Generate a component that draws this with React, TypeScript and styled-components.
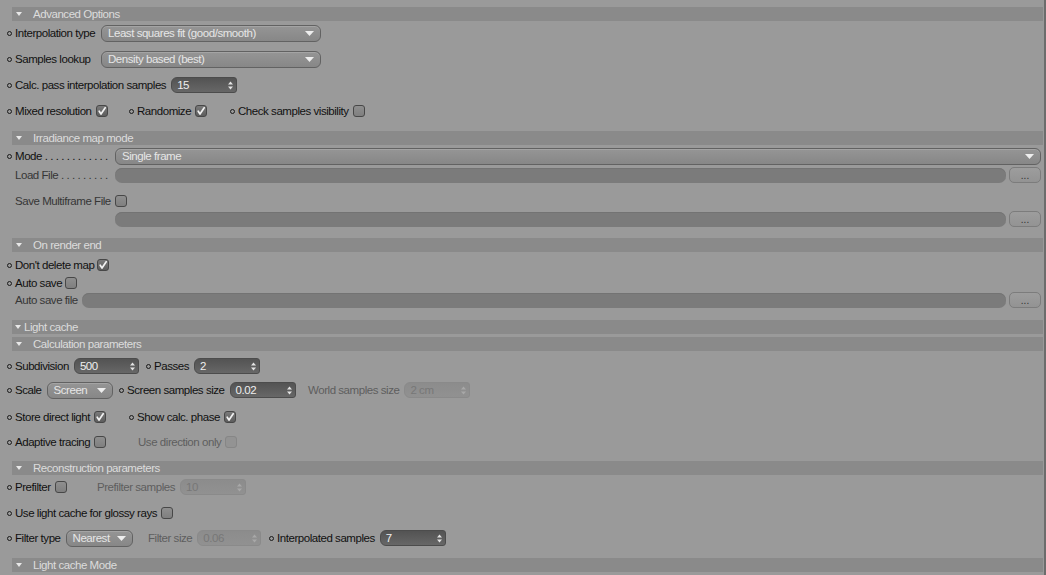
import styled, { createGlobalStyle } from "styled-components";

const GlobalStyle = createGlobalStyle`
  html, body {
    margin: 0;
    padding: 0;
    background: #9a9a9a;
  }
`;

const Page = styled.div`
  width: 1044px;
  height: 575px;
  overflow: hidden;
  border-right: 2px solid #6c6c6c;
  background: #9a9a9a;
  display: flex;
  flex-direction: column;
  font-family: "Liberation Sans", Arial, sans-serif;
  font-size: 11.5px;
  letter-spacing: -0.45px;
  color: #111;
`;

const Header = styled.div<{ $mt: number; $tight?: boolean }>`
  flex: none;
  margin: ${(p) => p.$mt}px 1px 0 12px;
  height: 14px;
  background: #8a8a8a;
  color: #dcdcdc;
  display: flex;
  align-items: center;
  padding-left: ${(p) => (p.$tight ? 3 : 4)}px;
  white-space: nowrap;
`;

const Caret = styled.span<{ $tight?: boolean }>`
  width: 0;
  height: 0;
  border-left: 3px solid transparent;
  border-right: 3px solid transparent;
  border-top: 4px solid #e8e8e8;
  margin-right: ${(p) => (p.$tight ? 3 : 11)}px;
`;

const Row = styled.div<{ $mt: number }>`
  flex: none;
  margin-top: ${(p) => p.$mt}px;
  height: 16px;
  display: flex;
  align-items: center;
  padding: 0 3px 0 7px;
`;

const Item = styled.div<{ $w?: number }>`
  display: flex;
  align-items: center;
  height: 100%;
  flex: ${(p) => (p.$w ? "none" : "1")};
  width: ${(p) => (p.$w ? `${p.$w}px` : "auto")};
`;

const Spacer = styled.div<{ $w: number }>`
  flex: none;
  width: ${(p) => p.$w}px;
`;

const Dot = styled.span<{ $off?: boolean }>`
  flex: none;
  box-sizing: border-box;
  width: 5px;
  height: 5px;
  border: 1px solid #1a1a1a;
  border-radius: 50%;
  margin-right: 3px;
  visibility: ${(p) => (p.$off ? "hidden" : "visible")};
`;

const Label = styled.span<{ $w?: number; $tone?: "dim" | "off" }>`
  flex: none;
  white-space: nowrap;
  min-width: ${(p) => (p.$w ? `${p.$w}px` : "0")};
  color: ${(p) =>
    p.$tone === "dim" ? "#363636" : p.$tone === "off" ? "#5e5e5e" : "#111"};
`;

const Select = styled.div<{ $w?: number; $ml?: number }>`
  box-sizing: border-box;
  height: 17px;
  flex: ${(p) => (p.$w ? "none" : "1")};
  width: ${(p) => (p.$w ? `${p.$w}px` : "auto")};
  margin-left: ${(p) => p.$ml ?? 0}px;
  border: 1px solid #626262;
  border-radius: 6px;
  background: linear-gradient(#959595, #878787);
  box-shadow: inset 0 1px 0 #a4a4a4;
  color: #e6e6e6;
  padding: 0 6px 0 6px;
  display: flex;
  align-items: center;
  justify-content: space-between;
  white-space: nowrap;
  overflow: hidden;
`;

const Spinner = styled.div<{ $w: number; $ml?: number; $off?: boolean }>`
  box-sizing: border-box;
  flex: none;
  height: 16px;
  width: ${(p) => p.$w}px;
  margin-left: ${(p) => p.$ml ?? 5}px;
  border-radius: 6px 3px 3px 6px;
  background: ${(p) =>
    p.$off ? "linear-gradient(#8c8c8c, #919191)" : "linear-gradient(#535353, #676767)"};
  border: 1px solid ${(p) => (p.$off ? "#8a8a8a" : "#4c4c4c")};
  color: ${(p) => (p.$off ? "#777" : "#eeeeee")};
  display: flex;
  align-items: center;
  justify-content: space-between;
  padding: 0 3px 0 5px;
`;

const Field = styled.div<{ $ml?: number }>`
  flex: 1;
  height: 15px;
  margin-left: ${(p) => p.$ml ?? 0}px;
  border-radius: 7px;
  background: #7b7b7b;
  box-shadow: inset 0 1px 0 #737373;
`;

const Browse = styled.div`
  box-sizing: border-box;
  flex: none;
  width: 32px;
  height: 16px;
  margin-left: 3px;
  border: 1px solid #7c7c7c;
  border-radius: 5px;
  background: linear-gradient(#9d9d9d, #939393);
  color: #333;
  font-size: 10px;
  letter-spacing: 0;
  display: flex;
  align-items: flex-end;
  justify-content: center;
  line-height: 12px;
`;

const Box = styled.span<{ $on?: boolean; $off?: boolean; $ml?: number }>`
  box-sizing: border-box;
  flex: none;
  width: 12px;
  height: 12px;
  margin-left: ${(p) => p.$ml ?? 4}px;
  border-radius: 3px;
  border: 1px solid ${(p) => (p.$off ? "#868686" : "#474747")};
  background: ${(p) =>
    p.$off
      ? "#939393"
      : p.$on
      ? "linear-gradient(#7a7a7a, #5d5d5d)"
      : "linear-gradient(#8f8f8f, #7f7f7f)"};
  display: flex;
  align-items: center;
  justify-content: center;
`;

function DownArrow() {
  return (
    <svg width="9" height="5" viewBox="0 0 9 5">
      <path d="M0 0 L9 0 L4.5 5 Z" fill="#eeeeee" />
    </svg>
  );
}

function UpDown({ off }: { off?: boolean }) {
  const c = off ? "#a8a8a8" : "#e4e4e4";
  return (
    <svg width="5" height="9" viewBox="0 0 5 9">
      <path d="M0 3.6 L2.5 0.5 L5 3.6 Z" fill={c} />
      <path d="M0 5.4 L2.5 8.5 L5 5.4 Z" fill={c} />
    </svg>
  );
}

function Check({ on, off, ml }: { on?: boolean; off?: boolean; ml?: number }) {
  return (
    <Box $on={on} $off={off} $ml={ml}>
      {on && (
        <svg width="10" height="10" viewBox="0 0 10 10">
          <path d="M2.2 5.2 L4 8 L8.2 1.8" stroke="#f2f2f2" strokeWidth="1.7" fill="none" strokeLinecap="round" strokeLinejoin="round" />
        </svg>
      )}
    </Box>
  );
}

function Num({ value, w, ml, off }: { value: string; w: number; ml?: number; off?: boolean }) {
  return (
    <Spinner $w={w} $ml={ml} $off={off}>
      <span>{value}</span>
      <UpDown off={off} />
    </Spinner>
  );
}

function Drop({ value, w, ml }: { value: string; w?: number; ml?: number }) {
  return (
    <Select $w={w} $ml={ml}>
      <span>{value}</span>
      <DownArrow />
    </Select>
  );
}

function Section({ title, mt, tight }: { title: string; mt: number; tight?: boolean }) {
  return (
    <Header $mt={mt} $tight={tight}>
      <Caret $tight={tight} />
      {title}
    </Header>
  );
}

// dot leaders as drawn by the UI after a label
const dots = (n: number) => " .".repeat(n);

export default function App() {
  return (
    <Page>
      <GlobalStyle />
      <Section title="Advanced Options" mt={7} />
      <Row $mt={4}>
        <Dot />
        <Label $w={86}>Interpolation type</Label>
        <Drop value="Least squares fit (good/smooth)" w={220} />
      </Row>
      <Row $mt={10}>
        <Dot />
        <Label $w={86}>Samples lookup</Label>
        <Drop value="Density based (best)" w={220} />
      </Row>
      <Row $mt={10}>
        <Dot />
        <Label>Calc. pass interpolation samples</Label>
        <Num value="15" w={66} />
      </Row>
      <Row $mt={10}>
        <Item $w={122}>
          <Dot />
          <Label>Mixed resolution</Label>
          <Check on />
        </Item>
        <Item $w={101}>
          <Dot />
          <Label>Randomize</Label>
          <Check on />
        </Item>
        <Item>
          <Dot />
          <Label>Check samples visibility</Label>
          <Check />
        </Item>
      </Row>

      <Section title="Irradiance map mode" mt={12} />
      <Row $mt={3}>
        <Dot />
        <Label $w={100}>Mode{dots(12)}</Label>
        <Drop value="Single frame" />
      </Row>
      <Row $mt={3}>
        <Dot $off />
        <Label $w={100} $tone="dim">Load File{dots(9)}</Label>
        <Field />
        <Browse>...</Browse>
      </Row>
      <Row $mt={10}>
        <Dot $off />
        <Label $tone="dim">Save Multiframe File</Label>
        <Check />
      </Row>
      <Row $mt={2}>
        <Spacer $w={108} />
        <Field />
        <Browse>...</Browse>
      </Row>

      <Section title="On render end" mt={11} />
      <Row $mt={5}>
        <Dot />
        <Label>Don't delete map</Label>
        <Check on ml={3} />
      </Row>
      <Row $mt={2}>
        <Dot />
        <Label>Auto save</Label>
        <Check ml={3} />
      </Row>
      <Row $mt={1}>
        <Dot $off />
        <Label $tone="dim">Auto save file</Label>
        <Field $ml={4} />
        <Browse>...</Browse>
      </Row>

      <Section title="Light cache" mt={12} tight />
      <Section title="Calculation parameters" mt={3} />
      <Row $mt={7}>
        <Item $w={139}>
          <Dot />
          <Label>Subdivision</Label>
          <Num value="500" w={65} />
        </Item>
        <Item>
          <Dot />
          <Label>Passes</Label>
          <Num value="2" w={66} />
        </Item>
      </Row>
      <Row $mt={8}>
        <Item $w={112}>
          <Dot />
          <Label>Scale</Label>
          <Drop value="Screen" w={66} ml={5} />
        </Item>
        <Item $w={181}>
          <Dot />
          <Label>Screen samples size</Label>
          <Num value="0.02" w={66} />
        </Item>
        <Item>
          <Dot $off />
          <Label $tone="off">World samples size</Label>
          <Num value="2 cm" w={66} off />
        </Item>
      </Row>
      <Row $mt={11}>
        <Item $w={122}>
          <Dot />
          <Label>Store direct light</Label>
          <Check on />
        </Item>
        <Item>
          <Dot />
          <Label>Show calc. phase</Label>
          <Check on />
        </Item>
      </Row>
      <Row $mt={9}>
        <Item $w={123}>
          <Dot />
          <Label>Adaptive tracing</Label>
          <Check />
        </Item>
        <Item>
          <Dot $off />
          <Label $tone="off">Use direction only</Label>
          <Check off />
        </Item>
      </Row>

      <Section title="Reconstruction parameters" mt={11} />
      <Row $mt={4}>
        <Item $w={82}>
          <Dot />
          <Label>Prefilter</Label>
          <Check />
        </Item>
        <Item>
          <Dot $off />
          <Label $tone="off">Prefilter samples</Label>
          <Num value="10" w={66} off />
        </Item>
      </Row>
      <Row $mt={10}>
        <Dot />
        <Label>Use light cache for glossy rays</Label>
        <Check />
      </Row>
      <Row $mt={9}>
        <Item $w={133}>
          <Dot />
          <Label>Filter type</Label>
          <Drop value="Nearest" w={67} ml={5} />
        </Item>
        <Item $w={129}>
          <Dot $off />
          <Label $tone="off">Filter size</Label>
          <Num value="0.06" w={64} off />
        </Item>
        <Item>
          <Dot />
          <Label>Interpolated samples</Label>
          <Num value="7" w={66} />
        </Item>
      </Row>

      <Section title="Light cache Mode" mt={12} />
    </Page>
  );
}
